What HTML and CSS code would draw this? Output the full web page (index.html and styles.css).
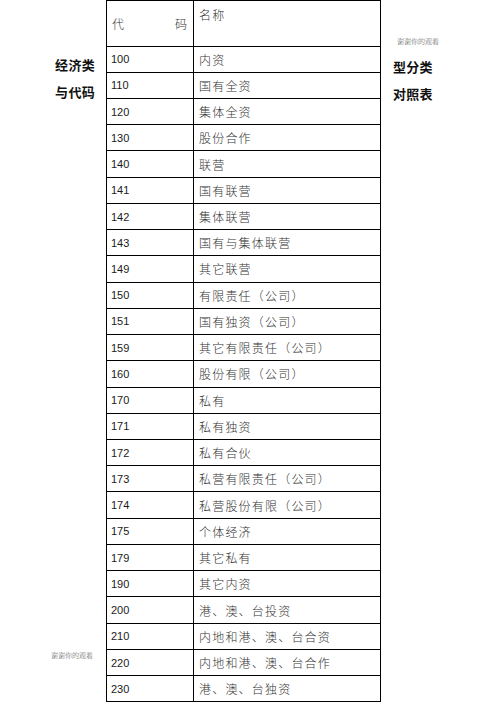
FILE: index.html
```html
<!DOCTYPE html>
<html lang="zh">
<head>
<meta charset="utf-8">
<link rel="stylesheet" href="styles.css">
</head>
<body>
<div class="page">
  <div class="side side-left">
    <div class="label first">经济类</div>
    <div class="label">与代码</div>
    <div class="mark mark-bottom">谢谢你的观看</div>
  </div>
  <div class="table">
    <div class="cell head code-head"><span>代</span><span>码</span></div>
    <div class="cell head name-head">名称</div>
    <div class="cell num">100</div><div class="cell name">内资</div>
    <div class="cell num">110</div><div class="cell name">国有全资</div>
    <div class="cell num">120</div><div class="cell name">集体全资</div>
    <div class="cell num">130</div><div class="cell name">股份合作</div>
    <div class="cell num">140</div><div class="cell name">联营</div>
    <div class="cell num">141</div><div class="cell name">国有联营</div>
    <div class="cell num">142</div><div class="cell name">集体联营</div>
    <div class="cell num">143</div><div class="cell name">国有与集体联营</div>
    <div class="cell num">149</div><div class="cell name">其它联营</div>
    <div class="cell num">150</div><div class="cell name">有限责任（公司）</div>
    <div class="cell num">151</div><div class="cell name">国有独资（公司）</div>
    <div class="cell num">159</div><div class="cell name">其它有限责任（公司）</div>
    <div class="cell num">160</div><div class="cell name">股份有限（公司）</div>
    <div class="cell num">170</div><div class="cell name">私有</div>
    <div class="cell num">171</div><div class="cell name">私有独资</div>
    <div class="cell num">172</div><div class="cell name">私有合伙</div>
    <div class="cell num">173</div><div class="cell name">私营有限责任（公司）</div>
    <div class="cell num">174</div><div class="cell name">私营股份有限（公司）</div>
    <div class="cell num">175</div><div class="cell name">个体经济</div>
    <div class="cell num">179</div><div class="cell name">其它私有</div>
    <div class="cell num">190</div><div class="cell name">其它内资</div>
    <div class="cell num">200</div><div class="cell name">港、澳、台投资</div>
    <div class="cell num">210</div><div class="cell name">内地和港、澳、台合资</div>
    <div class="cell num">220</div><div class="cell name">内地和港、澳、台合作</div>
    <div class="cell num">230</div><div class="cell name">港、澳、台独资</div>
  </div>
  <div class="side side-right">
    <div class="mark mark-top">谢谢你的观看</div>
    <div class="label first-r">型分类</div>
    <div class="label">对照表</div>
  </div>
</div>
</body>
</html>
```

FILE: styles.css
```css
html, body {
  margin: 0;
  padding: 0;
  background: #fff;
}
body {
  font-family: "Noto Sans CJK SC", sans-serif;
  color: #222;
  overflow: hidden;
  height: 702px;
}
.page {
  display: flex;
  align-items: flex-start;
}
.side {
  display: flex;
  flex-direction: column;
}
.side-left {
  width: 106px;
  align-items: flex-end;
  padding-right: 11px;
  box-sizing: border-box;
}
.side-right {
  padding-left: 12px;
}
.label {
  font-family: "Noto Sans CJK SC", sans-serif;
  font-weight: 700;
  font-size: 13px;
  line-height: 27px;
  color: #111;
  letter-spacing: 0.3px;
}
.side-left .label.first {
  margin-top: 51px;
}
.first-r {
  margin-top: 7px;
}
.mark {
  font-family: "Noto Sans CJK SC", serif;
  font-size: 7px;
  line-height: 10px;
  color: #555;
  font-weight: 300;
}
.mark-top {
  margin-top: 36px;
  margin-left: 4px;
}
.mark-bottom {
  margin-top: 545px;
  margin-right: 2px;
  align-self: flex-end;
}
.table {
  display: grid;
  grid-template-columns: 87px 187px;
  grid-template-rows: 45.5px;
  grid-auto-rows: 26.24px;
  border-top: 1px solid #000;
  border-left: 1px solid #000;
  width: 274px;
  flex: none;
}
.cell {
  border-right: 1px solid #000;
  border-bottom: 1px solid #000;
  box-sizing: border-box;
  display: flex;
  align-items: center;
  padding-left: 5px;
  overflow: hidden;
  white-space: nowrap;
}
.num {
  font-family: "Liberation Sans", Arial, sans-serif;
  font-size: 11px;
  color: #1a1a1a;
  padding-left: 4px;
}
.name {
  font-family: "Noto Sans CJK SC", sans-serif;
  font-weight: 300;
  font-size: 12px;
  letter-spacing: 1.2px;
  color: #333;
  padding-left: 5px;
}
.code-head {
  justify-content: space-between;
  padding: 0 6px 0 5px;
  font-weight: 300;
  font-size: 12px;
  color: #333;
}
.name-head {
  align-items: flex-start;
  padding-top: 5px;
  font-weight: 300;
  font-size: 12px;
  letter-spacing: 1.2px;
  color: #333;
}
```
